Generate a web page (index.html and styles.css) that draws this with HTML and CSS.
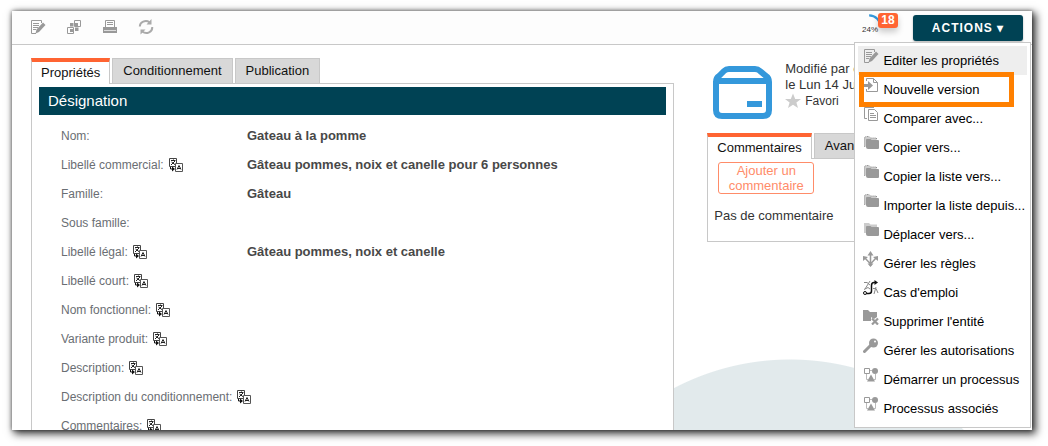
FILE: index.html
```
<!DOCTYPE html>
<html lang="fr">
<head>
    <meta charset="UTF-8">
    <title>Gateau à la pomme</title>
    <link rel="stylesheet" href="styles.css">
</head>
<body>
<svg class="sprite" aria-hidden="true">
    <symbol id="edit" viewBox="0 0 16 16">
        <path d="M6 14.500H1.500V1.500H11.500V4" fill="none" stroke="#999"/>
        <path d="M3 4.500H9M3 6.500H9M3 8.500H8M3 10.500H6" stroke="#999"/>
        <path d="M13 3.500L15.500 6L9 13L5.500 14.500L6.500 10.500Z" fill="#999"/>
    </symbol>
    <symbol id="tree" viewBox="0 0 16 16">
        <path d="M8.500 1.500H14.500V7.500H8.500ZM1.500 8.500H7.500V14.500H1.500Z" fill="none" stroke="#999"/>
        <path d="M4 4H7.500V7.500H4ZM9 8.500H12.500V12H9ZM9 4H12V7H9ZM4 10H7V13H4Z" fill="#999"/>
    </symbol>
    <symbol id="print" viewBox="0 0 16 16">
        <path d="M3.500 8V1.500H12.500V8" fill="none" stroke="#999"/>
        <path d="M5 3.500H11M5 5.500H11" stroke="#999"/>
        <path d="M1 8H15V14H1Z" fill="#999"/>
        <path d="M2 11.500H14" stroke="#ddd"/>
    </symbol>
    <symbol id="refresh" viewBox="0 0 16 16">
        <path d="M1.800 7.500A6 5.500 0 0 1 11.500 3.200M14.200 8A6 5.500 0 0 1 4.500 12.800" fill="none" stroke="#aaa" stroke-width="2"/>
        <path d="M13.500 0V5.500H8.500ZM2.500 15.500V10.500H7.500Z" fill="#aaa"/>
    </symbol>
    <symbol id="lang" viewBox="0 0 16 16">
        <path d="M1.500 1.500H8.500V9.500H1.500Z" fill="#fff" stroke="#444"/>
        <path d="M3 3.500H7.500M5.500 2.500V4M7 4L3 8M3.500 5L7.500 8" stroke="#222" fill="none"/>
        <path d="M2.500 10V12H5" stroke="#111" fill="none"/>
        <path d="M4 9.500L7 12L4 14.500Z" fill="#111"/>
        <path d="M7.500 6.500H14.500V14.500H7.500Z" fill="#fff" stroke="#555"/>
        <path d="M9 12.500L11 8.500L13 12.500M9.500 11.500H12.500" stroke="#222" fill="none"/>
    </symbol>
    <symbol id="version" viewBox="0 0 16 16">
        <path d="M3.500 4V1.500H10.500L14.500 5.500V14.500H3.500V12M10.500 1.500V5.500H14.500" fill="none" stroke="#999"/>
        <path d="M0 7H5V4L10 8.500L5 13V10H0Z" fill="#999"/>
    </symbol>
    <symbol id="compare" viewBox="0 0 16 16">
        <path d="M5.500 3.500H11.500L14.500 6.500V14.500H5.500ZM4 12.500H1.500V1.500H11" fill="none" stroke="#999"/>
        <path d="M7 7.500H11M7 9.500H13M7 11.500H13" stroke="#999"/>
    </symbol>
    <symbol id="copy" viewBox="0 0 16 16">
        <path d="M1.500 11.500V2.500L3 1.500H6L7.500 3H13.500V6H4V11.500Z" fill="#ccc" stroke="#888" stroke-dasharray="1 1"/>
        <path d="M3 5Q3 4 4 4H7Q8 4 8.500 5H15Q16 5 16 6V13Q16 14 15 14H5Q3 14 3 12Z" fill="#999"/>
    </symbol>
    <symbol id="move" viewBox="0 0 16 16">
        <path d="M1 1H6L7.500 2.500H14V11H1Z" fill="#ccc"/>
        <path d="M3 5Q3 4 4 4H7Q8 4 8.500 5H15Q16 5 16 6V13Q16 14 15 14H5Q3 14 3 12Z" fill="#999"/>
    </symbol>
    <symbol id="rules" viewBox="0 0 16 16">
        <path d="M7.500 2V15M2 7L7.500 13L13 7" fill="none" stroke="#999" stroke-width="1.500"/>
        <path d="M4.500 4.500L7.500 0L10.500 4.500ZM0 10L0 5L5 6ZM15 10V5L10 6ZM4.500 12.500L7.500 16L10.500 12.500Z" fill="#999"/>
    </symbol>
    <symbol id="usage" viewBox="0 0 16 16">
        <path d="M1 2.500H4L7 5M7 1L2 9M1 9.500L5 7.500L7 9M10 8.500H13L15 13M13 7L11 14" fill="none" stroke="#888"/>
        <path d="M3 13.500H6Q8.500 13.500 8.500 11V5.500Q8.500 2.500 11 2.500H12" fill="none" stroke="#111" stroke-width="1.500"/>
        <path d="M11.500 0L15 2.500L11.500 5Z" fill="#111"/>
        <circle cx="2" cy="13" r="1.500" fill="#fff" stroke="#111"/>
    </symbol>
    <symbol id="delete" viewBox="0 0 16 16">
        <path d="M0 1H5L7 3H14V8L11 10L8 8V12H0Z" fill="#999"/>
        <path d="M9 9.500L15 15.500M15 9.500L9 15.500" stroke="#999" stroke-width="2.200"/>
    </symbol>
    <symbol id="key" viewBox="0 0 16 16">
        <path d="M8 7L1.500 13.500" stroke="#999" stroke-width="3" stroke-linecap="round"/>
        <circle cx="10.500" cy="5" r="4.500" fill="#999"/>
        <circle cx="12" cy="3.500" r="1" fill="#fff"/>
    </symbol>
    <symbol id="process" viewBox="0 0 16 16">
        <path d="M1.500 1.500H6.500V6.500H1.500Z" fill="none" stroke="#999"/>
        <path d="M7 3.500H9M3.500 7V12.500H5M12.500 7V12.500H11" fill="none" stroke="#bbb"/>
        <circle cx="12" cy="4" r="3" fill="#999"/>
        <path d="M8 7.500L12 14.500H4Z" fill="#999"/>
    </symbol>
</svg>

<div class="window">
    <header class="toolbar">
        <div class="tools">
            <button type="button" aria-label="Editer"><svg class="icon"><use href="#edit"/></svg></button>
            <button type="button" aria-label="Arborescence"><svg class="icon"><use href="#tree"/></svg></button>
            <button type="button" aria-label="Imprimer"><svg class="icon"><use href="#print"/></svg></button>
            <button type="button" aria-label="Actualiser"><svg class="icon"><use href="#refresh"/></svg></button>
        </div>
        <div class="progress">
            <svg class="ring" viewBox="0 0 28 28">
                <path d="M10 2A16 16 0 0 1 26 18" fill="none" stroke="#3498db" stroke-width="3"/>
            </svg>
            <span class="percent">24%</span>
            <span class="badge">18</span>
        </div>
        <div class="actions">
            <button type="button" class="actions-btn">ACTIONS ▾</button>
            <nav class="menu">
                <a href="#" class="active"><svg class="icon"><use href="#edit"/></svg>Editer les propriétés</a>
                <a href="#" class="marked"><svg class="icon"><use href="#version"/></svg>Nouvelle version</a>
                <a href="#"><svg class="icon"><use href="#compare"/></svg>Comparer avec...</a>
                <a href="#"><svg class="icon"><use href="#copy"/></svg>Copier vers...</a>
                <a href="#"><svg class="icon"><use href="#copy"/></svg>Copier la liste vers...</a>
                <a href="#"><svg class="icon"><use href="#copy"/></svg>Importer la liste depuis...</a>
                <a href="#"><svg class="icon"><use href="#move"/></svg>Déplacer vers...</a>
                <a href="#"><svg class="icon"><use href="#rules"/></svg>Gérer les règles</a>
                <a href="#"><svg class="icon"><use href="#usage"/></svg>Cas d'emploi</a>
                <a href="#"><svg class="icon"><use href="#delete"/></svg>Supprimer l'entité</a>
                <a href="#"><svg class="icon"><use href="#key"/></svg>Gérer les autorisations</a>
                <a href="#"><svg class="icon"><use href="#process"/></svg>Démarrer un processus</a>
                <a href="#"><svg class="icon"><use href="#process"/></svg>Processus associés</a>
            </nav>
        </div>
    </header>

    <main class="content">
        <section class="main-col">
            <div class="tabs">
                <button type="button" class="tab active">Propriétés</button>
                <button type="button" class="tab">Conditionnement</button>
                <button type="button" class="tab">Publication</button>
            </div>
            <div class="panel properties">
                <h2>Désignation</h2>
                <dl>
                    <div><dt>Nom:</dt><dd>Gateau à la pomme</dd></div>
                    <div><dt>Libellé commercial: <svg class="icon"><use href="#lang"/></svg></dt><dd>Gâteau pommes, noix et canelle pour 6 personnes</dd></div>
                    <div><dt>Famille:</dt><dd>Gâteau</dd></div>
                    <div><dt>Sous famille:</dt></div>
                    <div><dt>Libellé légal: <svg class="icon"><use href="#lang"/></svg></dt><dd>Gâteau pommes, noix et canelle</dd></div>
                    <div><dt>Libellé court: <svg class="icon"><use href="#lang"/></svg></dt></div>
                    <div><dt>Nom fonctionnel: <svg class="icon"><use href="#lang"/></svg></dt></div>
                    <div><dt>Variante produit: <svg class="icon"><use href="#lang"/></svg></dt></div>
                    <div><dt>Description: <svg class="icon"><use href="#lang"/></svg></dt></div>
                    <div><dt>Description du conditionnement: <svg class="icon"><use href="#lang"/></svg></dt></div>
                    <div><dt>Commentaires: <svg class="icon"><use href="#lang"/></svg></dt></div>
                </dl>
            </div>
        </section>

        <aside class="side-col">
            <div class="summary">
                <svg class="box" viewBox="0 0 60 54">
                    <path d="M17 3H43Q46 3 48 5L54 10Q57 12 57 16V44Q57 50 51 50H10Q4 50 4 44V16Q4 12 7 10L12 5Q14 3 17 3ZM6 15H55" fill="none" stroke="#3498db" stroke-width="6"/>
                    <path d="M35 38H50" stroke="#3498db" stroke-width="6"/>
                </svg>
                <div class="infos">
                    <p>Modifié par c</p>
                    <p>le Lun 14 Ju</p>
                    <a href="#" class="favori"><svg class="icon" viewBox="0 0 16 16"><path d="M8 .5L10.200 6H16L11.400 9.500L13 15L8 11.700L3 15L4.600 9.500L0 6H5.800Z" fill="#ccc"/></svg>Favori</a>
                </div>
            </div>
            <div class="tabs">
                <button type="button" class="tab active">Commentaires</button>
                <button type="button" class="tab">Avan</button>
            </div>
            <div class="panel comments">
                <button type="button" class="add-btn">Ajouter un commentaire</button>
                <p>Pas de commentaire</p>
            </div>
        </aside>
    </main>
</div>
</body>
</html>
```
FILE: styles.css
```
*{
    margin: 0;
    padding: 0;
    box-sizing: border-box;
}
body{
    height: 100vh;
    padding: 11px 16px 16px 12px;
    background-color: #fff;
    font-family: "Liberation Sans", Arial, sans-serif;
    font-size: 13px;
    color: #333;
}
button{
    border: none;
    background: none;
    font: inherit;
    color: inherit;
    cursor: pointer;
}
a{
    color: inherit;
    text-decoration: none;
}
.sprite{
    display: none;
}
.icon{
    width: 16px;
    height: 16px;
    flex: none;
}
.window{
    height: 100%;
    display: flex;
    flex-direction: column;
    box-shadow: 3px 3px 8px 1px rgba(0, 0, 0, 0.75), 0 0 4px rgba(0, 0, 0, 0.5);
}

/* toolbar */
.toolbar{
    height: 34px;
    flex: none;
    display: flex;
    align-items: center;
    padding: 0 9px 0 18px;
    background-color: #fdfdfd;
    border-bottom: 1px solid #c8c8c8;
}
.tools{
    display: flex;
    gap: 20px;
    margin-right: auto;
    padding-bottom: 2px;
}
.tools button{
    height: 16px;
}
.progress{
    position: relative;
    width: 36px;
    height: 30px;
    margin-right: 15px;
}
.ring{
    position: absolute;
    left: 0;
    top: 1px;
    width: 20px;
    height: 20px;
}
.percent{
    position: absolute;
    left: 0;
    bottom: 8px;
    font-size: 8px;
    line-height: 10px;
}
.badge{
    position: absolute;
    right: 0;
    top: 0;
    width: 20px;
    border-radius: 3px;
    background-color: #ff6432;
    box-shadow: 0 4px 6px rgba(0, 0, 0, 0.2);
    color: #fff;
    font-size: 12px;
    font-weight: bold;
    line-height: 15px;
    text-align: center;
}
.actions{
    position: relative;
}
.actions-btn{
    width: 110px;
    height: 26px;
    border-radius: 3px;
    background-color: #004254;
    box-shadow: 0 1px 2px rgba(0, 0, 0, 0.3);
    color: #fff;
    font-size: 12px;
    font-weight: bold;
    letter-spacing: 1px;
}
.menu{
    position: absolute;
    right: -8px;
    top: 27px;
    z-index: 2;
    padding: 3px 3px 4px;
    border: 1px solid #c8c8c8;
    background-color: #fff;
    color: #000;
    white-space: nowrap;
}
.menu a{
    display: flex;
    align-items: flex-start;
    gap: 4px;
    height: 29px;
    padding: 2px 2px 0 5px;
    line-height: 26px;
}
.menu .active{
    background-color: #eee;
}
.menu .marked{
    position: relative;
}
.menu .marked:after{
    content: "";
    position: absolute;
    top: -3px;
    right: 13px;
    bottom: -3px;
    left: 1px;
    border: 5px solid #ff8000;
}

/* content */
.content{
    flex: 1;
    min-height: 0;
    display: grid;
    grid-template-columns: 19fr 9fr;
    gap: 33px;
    padding: 13px 20px 0 19px;
    overflow: hidden;
    background: radial-gradient(circle 250px at 778px 564px, #e2eaec 249px, #fff 250px);
}
.tabs{
    display: flex;
    align-items: flex-start;
    gap: 2px;
}
.tab{
    height: 26px;
    padding: 0 10px 2px;
    border: 1px solid #c8c8c8;
    background-color: #d8d8d8;
    color: #111;
}
.tab.active{
    position: relative;
    padding: 0 9px 2px;
    border-top: 4px solid #ff6432;
    border-bottom: none;
    background-color: #fff;
}
.panel{
    margin-top: -1px;
    border: 1px solid #c8c8c8;
    background-color: #fff;
}
.properties{
    padding: 3px 7px;
}
.properties h2{
    padding-left: 9px;
    background-color: #004254;
    color: #fff;
    font-size: 15px;
    font-weight: normal;
    line-height: 28px;
}
.properties dl{
    padding: 6px 0 0 22px;
}
.properties dl div{
    display: flex;
    height: 29px;
    line-height: 30px;
}
.properties dt{
    display: flex;
    align-items: center;
    gap: 4px;
    flex: 0 0 186px;
    color: #6a6e73;
    font-size: 12px;
    white-space: nowrap;
}
.properties dd{
    color: #484848;
    font-weight: bold;
}

/* side column */
.summary{
    display: flex;
    gap: 13px;
    padding: 3px 0 13px 5px;
}
.box{
    width: 60px;
    height: 54px;
    margin-top: 5px;
}
.infos{
    font-size: 13px;
    line-height: 16px;
}
.favori{
    display: flex;
    gap: 4px;
    font-size: 12px;
}
.comments{
    padding: 3px 6px 18px;
}
.comments p{
    margin-top: 14px;
}
.add-btn{
    display: block;
    width: 96px;
    height: 32px;
    margin-left: 4px;
    border: 1px solid #ff8c69;
    border-radius: 3px;
    color: #ff8c69;
    line-height: 15px;
}
```
